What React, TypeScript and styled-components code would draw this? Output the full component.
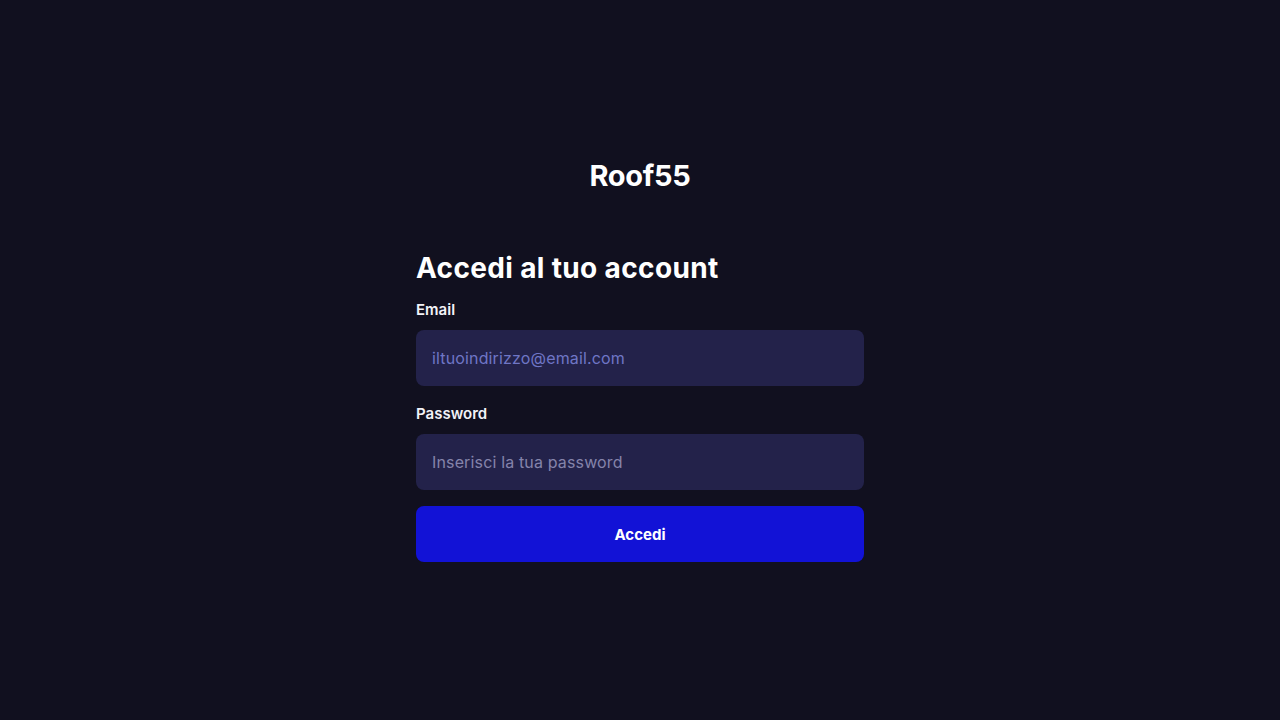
import React from "react";
import styled, { createGlobalStyle } from "styled-components";

const Global = createGlobalStyle`
  html, body { margin: 0; padding: 0; background: #11101f; }
  body { font-family: Inter, "Noto Sans", sans-serif; color: #ffffff; }
  * { box-sizing: border-box; }
`;

const Page = styled.main`
  min-height: 720px;
  display: flex;
  flex-direction: column;
  align-items: center;
  padding-top: 157px;
`;

const Logo = styled.h1`
  margin: 0;
  font-size: 29px;
  line-height: 38px;
  font-weight: 700;
  letter-spacing: -0.3px;
`;

const Form = styled.form`
  width: 448px;
  margin-top: 55px;
  display: flex;
  flex-direction: column;
`;

const Title = styled.h2`
  margin: 0 0 14px;
  font-size: 28px;
  line-height: 36px;
  font-weight: 700;
  letter-spacing: 0.35px;
`;

const Field = styled.div`
  display: flex;
  flex-direction: column;
  gap: 10px;
  margin-bottom: 18px;
  &:last-of-type { margin-bottom: 16px; }
`;

const Label = styled.label`
  font-size: 15px;
  line-height: 20px;
  font-weight: 600;
  color: #f2f2f7;
`;

const Input = styled.input<{ $ph: string }>`
  height: 56px;
  border: none;
  border-radius: 8px;
  background: #23224a;
  padding: 0 16px;
  font-family: inherit;
  font-size: 16px;
  letter-spacing: 0.15px;
  color: #fff;
  outline: none;
  &::placeholder { color: ${(p) => p.$ph}; opacity: 1; }
`;

const Button = styled.button`
  height: 56px;
  border: none;
  border-radius: 8px;
  background: #1212d6;
  color: #fff;
  font-family: inherit;
  font-size: 15px;
  font-weight: 700;
  cursor: pointer;
`;

export default function App() {
  return (
    <>
      <Global />
      <Page>
        <Logo>Roof55</Logo>
        <Form onSubmit={(e) => e.preventDefault()}>
          <Title>Accedi al tuo account</Title>
          <Field>
            <Label htmlFor="email">Email</Label>
            <Input id="email" type="email" placeholder="iltuoindirizzo@email.com" $ph="#6f76c6" />
          </Field>
          <Field>
            <Label htmlFor="pw">Password</Label>
            <Input id="pw" type="password" placeholder="Inserisci la tua password" $ph="#8584ab" />
          </Field>
          <Button type="submit">Accedi</Button>
        </Form>
      </Page>
    </>
  );
}
